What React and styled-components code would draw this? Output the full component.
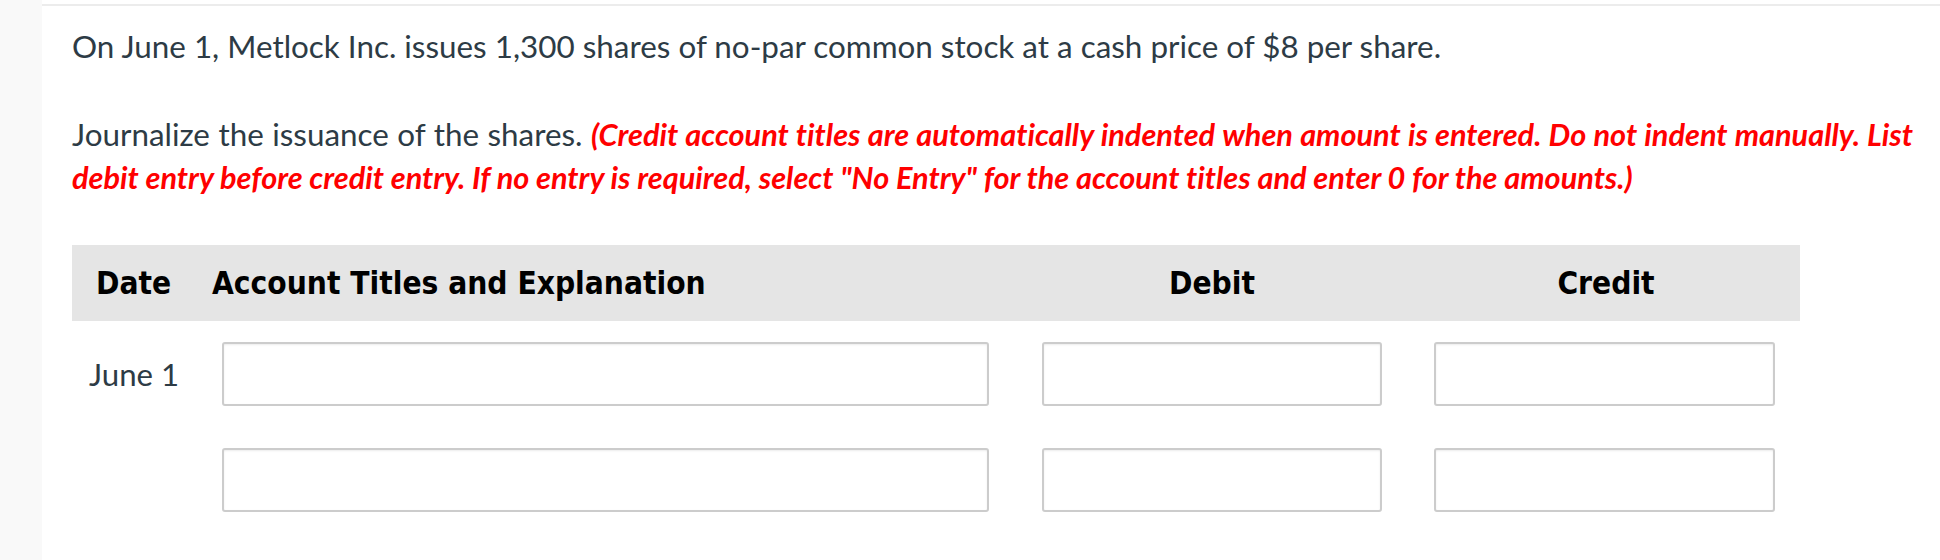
import React from "react";
import styled, { createGlobalStyle } from "styled-components";

const GlobalStyle = createGlobalStyle`
  html, body {
    margin: 0;
    padding: 0;
    background: #ffffff;
  }
  body {
    font-family: Lato, "Open Sans", "Liberation Sans", sans-serif;
    font-variant-ligatures: no-common-ligatures;
  }
  * { box-sizing: border-box; }
`;

const Page = styled.div`
  display: flex;
  min-height: 560px;
  background: #ffffff;
`;

const Gutter = styled.div`
  flex: none;
  width: 42px;
  background: #f9f9f9;
`;

const Main = styled.main`
  flex: 1;
  display: flex;
  flex-direction: column;
  gap: 44px;
  margin-top: 4px;
  border-top: 2px solid #ececec;
  padding: 19px 27px 0 30px;
`;

const Paragraph = styled.p`
  margin: 0;
  font-size: 31.4px;
  line-height: 43.5px;
  color: #2d3b45;
  text-align: ${(p) => (p.$justify ? "justify" : "left")};
`;

const Hint = styled.strong`
  color: #ff0000;
  font-style: italic;
  font-weight: 700;
  font-size: 30.7px;
`;

const cols = "140px 800px 400px 388px";

const Table = styled.div`
  width: 1728px;
  margin-top: 1px;
`;

const HeaderRow = styled.div`
  display: grid;
  grid-template-columns: ${cols};
  align-items: center;
  height: 76px;
  background: #e5e5e5;
  color: #000000;
  font-family: "DejaVu Sans Condensed", "DejaVu Sans", sans-serif;
  font-stretch: condensed;
  font-weight: 700;
  font-size: 31.4px;
`;

const HeaderCell = styled.div`
  padding-left: ${(p) => p.$pad || 0}px;
  text-align: ${(p) => p.$align || "left"};
`;

const BodyRow = styled.div`
  display: grid;
  grid-template-columns: ${cols};
  align-items: center;
  padding: 21px 0;
`;

const DateCell = styled.div`
  padding-left: 17px;
  font-size: 31.2px;
  color: #2d3b45;
`;

const Field = styled.input`
  display: block;
  height: 64px;
  width: ${(p) => p.$w}px;
  margin-left: ${(p) => p.$ml}px;
  border: 2px solid #cccccc;
  border-radius: 3px;
  background: #ffffff;
  box-shadow: inset 0 1px 2px rgba(0, 0, 0, 0.08);
  outline: none;
  font-family: Lato, sans-serif;
  font-size: 28px;
`;

const rows = [{ date: "June 1" }, { date: "" }];

export default function App() {
  return (
    <>
      <GlobalStyle />
      <Page>
        <Gutter />
        <Main>
          <Paragraph>
            On June 1, Metlock Inc. issues 1,300 shares of no-par common stock at a cash price of $8 per share.
          </Paragraph>
          <Paragraph $justify>
            Journalize the issuance of the shares.{" "}
            <Hint>
              (Credit account titles are automatically indented when amount is entered. Do not indent manually. List
              debit entry before credit entry. If no entry is required, select "No Entry" for the account titles and
              enter 0 for the amounts.)
            </Hint>
          </Paragraph>
          <Table>
            <HeaderRow>
              <HeaderCell $pad={24}>Date</HeaderCell>
              <HeaderCell>Account Titles and Explanation</HeaderCell>
              <HeaderCell $align="center">Debit</HeaderCell>
              <HeaderCell $align="center">Credit</HeaderCell>
            </HeaderRow>
            {rows.map((r, i) => (
              <BodyRow key={i}>
                <DateCell>{r.date}</DateCell>
                <div>
                  <Field $w={767} $ml={10} />
                </div>
                <div>
                  <Field $w={340} $ml={30} />
                </div>
                <div>
                  <Field $w={341} $ml={22} />
                </div>
              </BodyRow>
            ))}
          </Table>
        </Main>
      </Page>
    </>
  );
}
